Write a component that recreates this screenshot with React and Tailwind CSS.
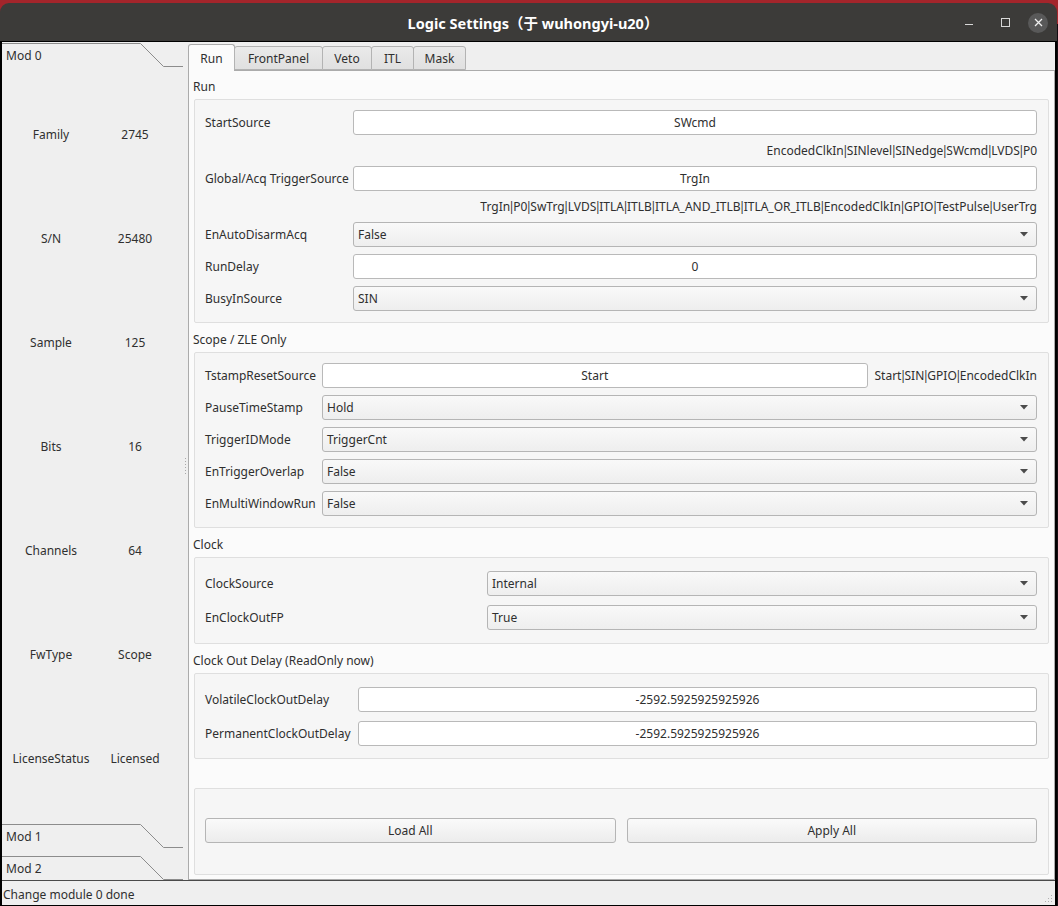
import React from "react";

function ToolHeader({ label, className = "" }) {
  return (
    <div className={"relative h-[25px] shrink-0 " + className}>
      <svg className="absolute left-0 top-0" width="183" height="25" viewBox="0 0 183 25">
        <path d="M0 1.5 H138.5 L161.5 24.5 H181" fill="none" stroke="#8c8c8c" strokeWidth="1" />
      </svg>
      <div className="relative pl-[4px] leading-[25px] h-[25px] pt-[1px]">{label}</div>
    </div>
  );
}

function InfoRow({ label, value }) {
  return (
    <div className="grid grid-cols-[98px_70px] h-[104px] items-center text-center">
      <div>{label}</div>
      <div>{value}</div>
    </div>
  );
}

function Input({ value, className = "" }) {
  return (
    <div
      className={
        "h-[25px] flex items-center justify-center bg-white border border-[#b9b9b9] rounded-[3px] " +
        className
      }
    >
      {value}
    </div>
  );
}

function Combo({ value }) {
  return (
    <div className="h-[25px] flex-1 flex items-center justify-between pl-[4px] pr-[8px] border border-[#b5b5b5] rounded-[3px] bg-[linear-gradient(to_bottom,#f9f9f9,#eeeeee)]">
      <span>{value}</span>
      <svg width="8" height="5" viewBox="0 0 8 5">
        <path d="M0 0 H8 L4 4.5 Z" fill="#4b4b4b" />
      </svg>
    </div>
  );
}

function Row({ label, labelW, children }) {
  return (
    <div className="flex items-center h-[25px]">
      <div className={"shrink-0 whitespace-nowrap " + labelW}>{label}</div>
      <div className="flex-1 flex items-center">{children}</div>
    </div>
  );
}

function Piped({ text }) {
  const parts = text.split("|");
  return (
    <>
      {parts.map((p, i) => (
        <React.Fragment key={i}>
          {i > 0 && <span className="-mx-[1.8px]">|</span>}
          {p}
        </React.Fragment>
      ))}
    </>
  );
}

function Hint({ text }) {
  return (
    <div className="h-[17px] leading-[17px] text-right whitespace-nowrap">
      <Piped text={text} />
    </div>
  );
}

function Title({ text, className = "" }) {
  return <div className={"h-[17px] leading-[17px] mb-[4px] -ml-[1px] " + className}>{text}</div>;
}

function Box({ children, className = "" }) {
  return (
    <div className={"border border-[#dfdfdf] rounded-[2px] bg-[#f6f6f6] pl-[10px] pr-[11px] " + className}>
      {children}
    </div>
  );
}

function Button({ label }) {
  return (
    <div className="flex-1 h-[25px] flex items-center justify-center border border-[#b5b5b5] rounded-[3px] bg-[linear-gradient(to_bottom,#fafafa,#ececec)]">
      {label}
    </div>
  );
}

export default function App() {
  return (
    <div className="w-[1058px] h-[906px] overflow-hidden bg-[linear-gradient(to_bottom,#a3252b_0px,#a3252b_24px,#140b10_24px)] font-['Noto_Sans',sans-serif] text-[12px] text-[#2f2f2f]">
      <div className="flex flex-col h-full pt-[3px] pr-[1px]">
        {/* Title bar */}
        <div className="h-[38px] shrink-0 rounded-t-[9px] bg-[#3c3b39] flex items-center">
          <div className="flex-1" />
          <div className="text-white font-bold text-[14.5px] font-['Noto_Sans','Noto_Sans_CJK_SC',sans-serif] whitespace-nowrap pt-[3px] ml-[18px]">
            Logic Settings（于 wuhongyi-u20）
          </div>
          <div className="flex-1 flex items-center justify-end pr-[9px] pt-[1px]">
            <div className="w-[36px] flex justify-center">
              <div className="w-[8px] h-[1px] bg-[#d8d8d8] mt-[4px]" />
            </div>
            <div className="w-[36px] flex justify-center mr-[5px]">
              <div className="w-[9px] h-[9px] border border-[#d8d8d8]" />
            </div>
            <div className="w-[20px] h-[20px] rounded-full bg-[#595959] flex items-center justify-center">
              <svg width="9" height="9" viewBox="0 0 9 9">
                <path d="M1 1 L8 8 M8 1 L1 8" stroke="#f0f0f0" strokeWidth="1.3" />
              </svg>
            </div>
          </div>
        </div>

        {/* Window body */}
        <div className="flex-1 flex flex-col border-t border-b border-l-[2px] border-r-[2px] border-black bg-[#efefef] min-h-0">
          <div className="flex-1 flex min-h-0">
            {/* Left tool box */}
            <div className="w-[183px] shrink-0 flex flex-col">
              <ToolHeader label="Mod 0" />
              <div className="flex-1 pt-[16px]">
                <InfoRow label="Family" value="2745" />
                <InfoRow label="S/N" value="25480" />
                <InfoRow label="Sample" value="125" />
                <InfoRow label="Bits" value="16" />
                <InfoRow label="Channels" value="64" />
                <InfoRow label="FwType" value="Scope" />
                <InfoRow label="LicenseStatus" value="Licensed" />
              </div>
              <ToolHeader label="Mod 1" className="mb-[7px]" />
              <ToolHeader label="Mod 2" />
            </div>

            {/* Splitter */}
            <div className="w-[3px] shrink-0 flex items-center">
              <svg width="3" height="20" viewBox="0 0 3 20" className="mt-[12px]">
                {[1, 4, 7, 10, 13, 16].map((y) => (
                  <rect key={y} x="0" y={y} width="1" height="1" fill="#a8a8a8" />
                ))}
              </svg>
            </div>

            {/* Tab widget */}
            <div className="flex-1 flex flex-col pt-[2px] min-w-0">
              <div className="h-[26px] flex items-end relative z-10 shrink-0">
                <div className="w-[47px] h-[27px] -mb-px border border-b-0 border-[#ababab] rounded-t-[3px] bg-[#fbfbfb] flex items-center justify-center pt-[1px]">
                  Run
                </div>
                {[
                  ["FrontPanel", "w-[89px]"],
                  ["Veto", "w-[50px]"],
                  ["ITL", "w-[43px]"],
                  ["Mask", "w-[53px]"],
                ].map(([t, w]) => (
                  <div
                    key={t}
                    className={
                      w +
                      " h-[24px] -ml-px border border-[#b3b3b3] rounded-t-[3px] bg-[linear-gradient(to_bottom,#eaeaea,#e0e0e0)] flex items-center justify-center pt-[2px]"
                    }
                  >
                    {t}
                  </div>
                ))}
              </div>

              <div className="flex-1 border border-[#ababab] bg-[#fbfbfb] px-[5px] pt-[7px] flex flex-col">
                {/* Run */}
                <Title text="Run" />
                <Box className="pt-[10px] pb-[11px]">
                  <div className="flex flex-col gap-[7px]">
                    <Row label="StartSource" labelW="w-[148px]">
                      <Input value="SWcmd" className="flex-1" />
                    </Row>
                    <Hint text="EncodedClkIn|SINlevel|SINedge|SWcmd|LVDS|P0" />
                    <Row label="Global/Acq TriggerSource" labelW="w-[148px]">
                      <Input value="TrgIn" className="flex-1" />
                    </Row>
                    <Hint text="TrgIn|P0|SwTrg|LVDS|ITLA|ITLB|ITLA_AND_ITLB|ITLA_OR_ITLB|EncodedClkIn|GPIO|TestPulse|UserTrg" />
                    <Row label="EnAutoDisarmAcq" labelW="w-[148px]">
                      <Combo value="False" />
                    </Row>
                    <Row label="RunDelay" labelW="w-[148px]">
                      <Input value="0" className="flex-1" />
                    </Row>
                    <Row label="BusyInSource" labelW="w-[148px]">
                      <Combo value="SIN" />
                    </Row>
                  </div>
                </Box>

                {/* Scope / ZLE Only */}
                <Title text="Scope / ZLE Only" className="mt-[8px]" />
                <Box className="pt-[10px] pb-[11px]">
                  <div className="flex flex-col gap-[7px]">
                    <Row label="TstampResetSource" labelW="w-[117px]">
                      <Input value="Start" className="flex-1" />
                      <span className="ml-[7px] whitespace-nowrap">
                        <Piped text="Start|SIN|GPIO|EncodedClkIn" />
                      </span>
                    </Row>
                    <Row label="PauseTimeStamp" labelW="w-[117px]">
                      <Combo value="Hold" />
                    </Row>
                    <Row label="TriggerIDMode" labelW="w-[117px]">
                      <Combo value="TriggerCnt" />
                    </Row>
                    <Row label="EnTriggerOverlap" labelW="w-[117px]">
                      <Combo value="False" />
                    </Row>
                    <Row label="EnMultiWindowRun" labelW="w-[117px]">
                      <Combo value="False" />
                    </Row>
                  </div>
                </Box>

                {/* Clock */}
                <Title text="Clock" className="mt-[8px]" />
                <Box className="pt-[13px] pb-[13px]">
                  <div className="flex flex-col gap-[9px]">
                    <Row label="ClockSource" labelW="w-[282px]">
                      <Combo value="Internal" />
                    </Row>
                    <Row label="EnClockOutFP" labelW="w-[282px]">
                      <Combo value="True" />
                    </Row>
                  </div>
                </Box>

                {/* Clock Out Delay */}
                <Title text="Clock Out Delay (ReadOnly now)" className="mt-[8px]" />
                <Box className="pt-[13px] pb-[12px]">
                  <div className="flex flex-col gap-[9px]">
                    <Row label="VolatileClockOutDelay" labelW="w-[153px]">
                      <Input value="-2592.5925925925926" className="flex-1" />
                    </Row>
                    <Row label="PermanentClockOutDelay" labelW="w-[153px]">
                      <Input value="-2592.5925925925926" className="flex-1" />
                    </Row>
                  </div>
                </Box>

                {/* Buttons */}
                <Box className="mt-[29px] h-[87px] flex items-center pb-[2px]">
                  <div className="flex-1 flex gap-[11px]">
                    <Button label="Load All" />
                    <Button label="Apply All" />
                  </div>
                </Box>
              </div>
            </div>
          </div>

          {/* Status bar */}
          <div className="h-[25px] shrink-0 border-t border-[#4a4a4a] flex items-center justify-between pl-[1px] pt-[3px]">
            <span>Change module 0 done</span>
            <svg width="10" height="10" viewBox="0 0 10 10" className="self-end mb-[2px] mr-[2px]">
              {[
                [8, 2], [5, 5], [8, 5], [2, 8], [5, 8], [8, 8],
              ].map(([x, y]) => (
                <rect key={x + "-" + y} x={x} y={y} width="1" height="1" fill="#b0b0b0" />
              ))}
            </svg>
          </div>
        </div>
      </div>
    </div>
  );
}
